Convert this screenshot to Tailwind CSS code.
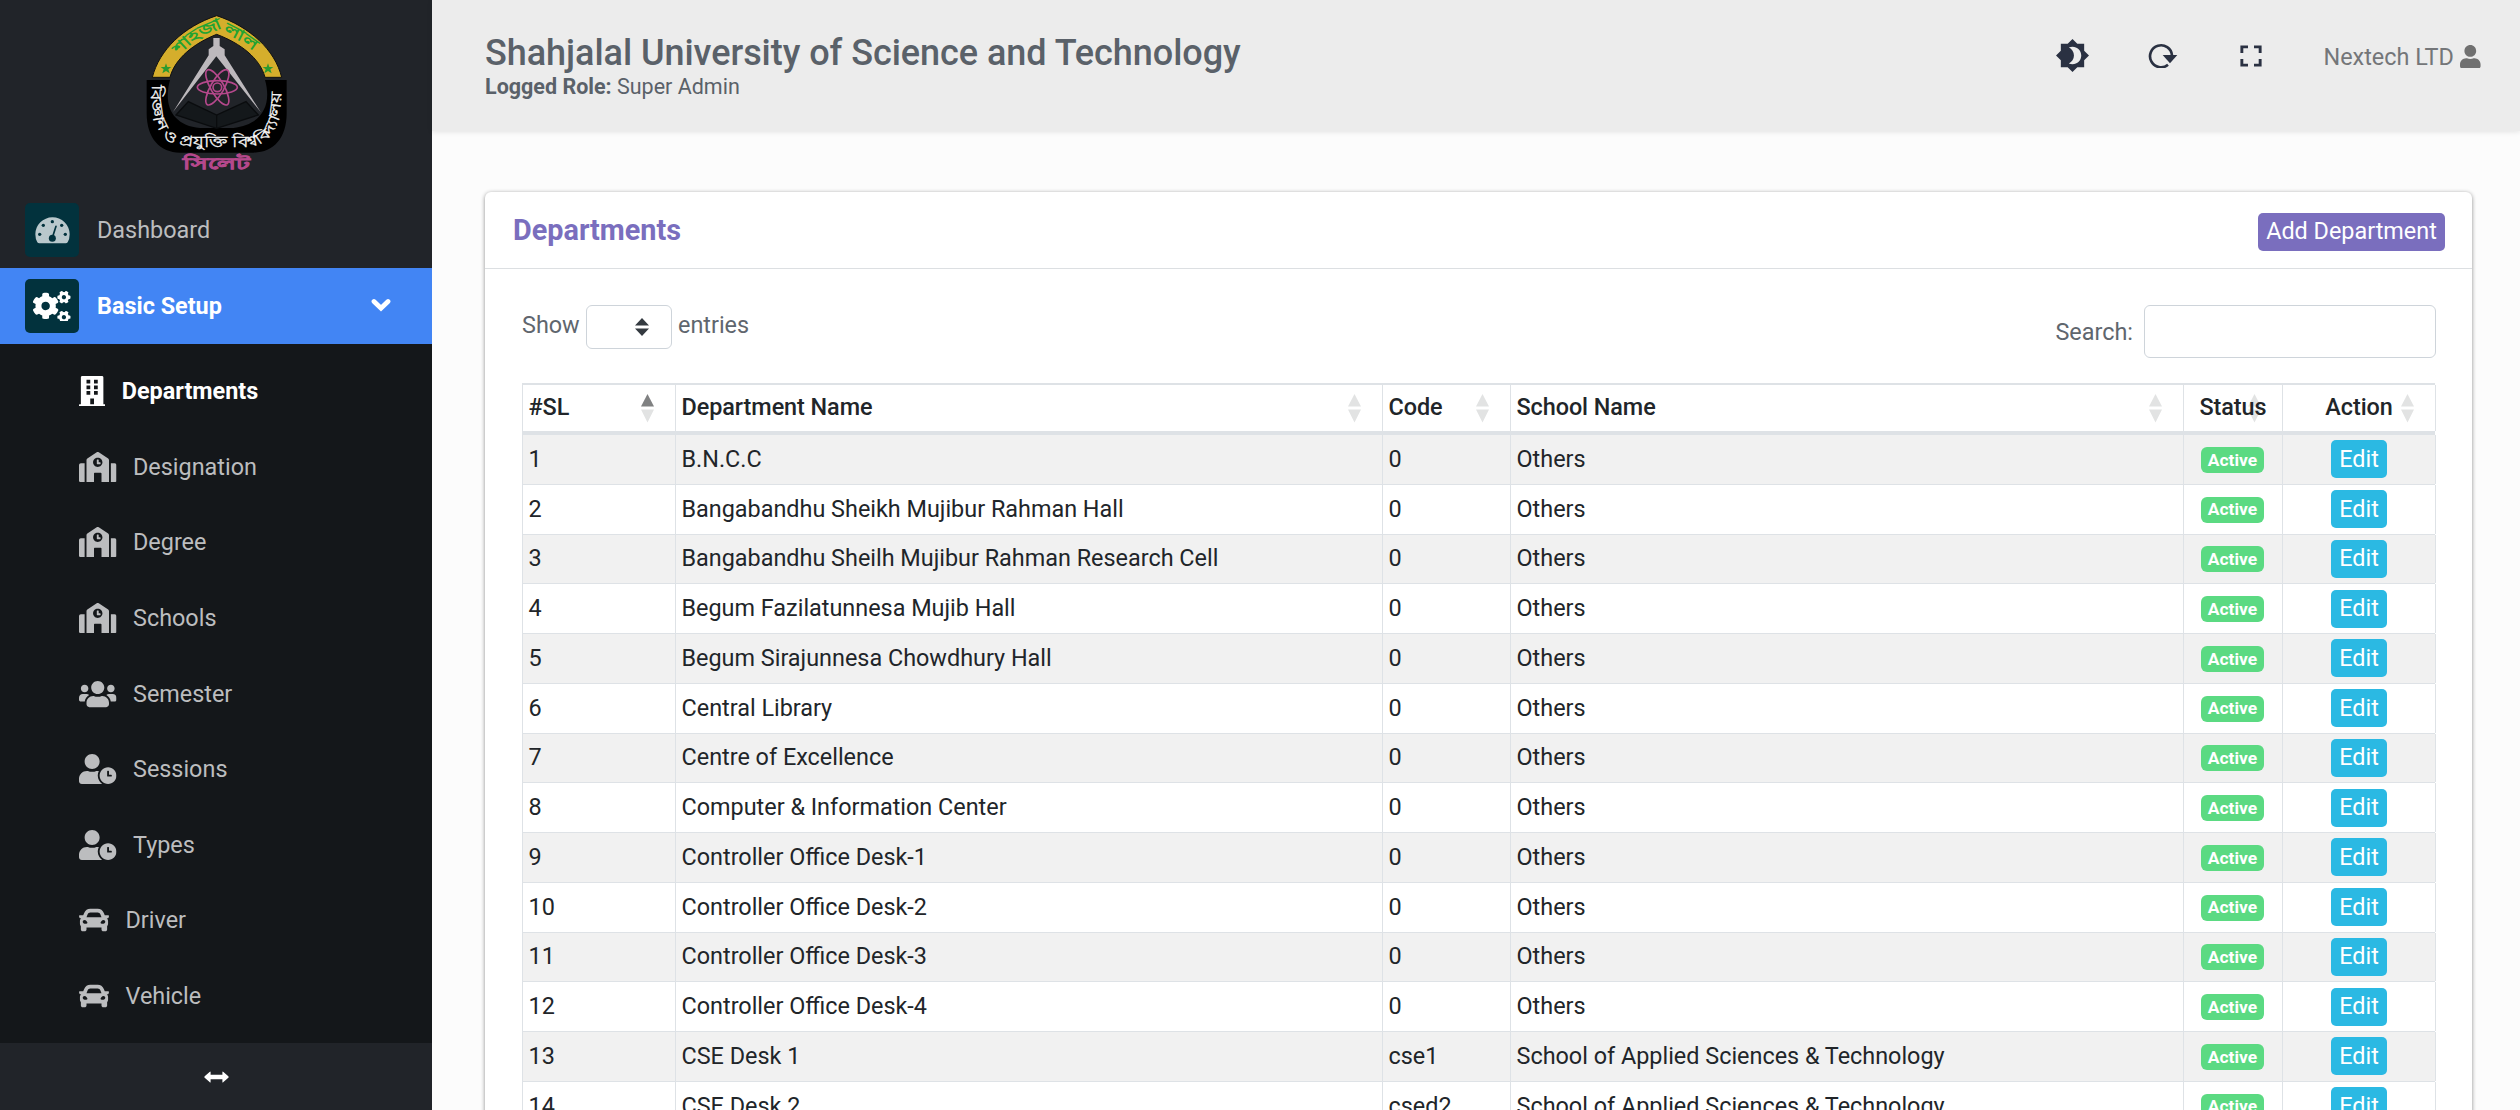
<!DOCTYPE html>
<html lang="en">
<head>
<meta charset="utf-8">
<title>Departments</title>
<script src="https://cdn.jsdelivr.net/npm/@tailwindcss/browser@4"></script>
</head>
<body class="h-[1110px] w-[2520px] overflow-hidden bg-[#fcfcfc] font-['Roboto',sans-serif] text-[23.4px] leading-[36px] text-[#212529]">
<svg class="hidden">
  <defs>
    <path id="small-gear" d="M512.1 191l-8.2 14.3c-3 5.3-9.4 7.5-15.1 5.4-11.8-4.4-22.6-10.7-32.1-18.6-4.6-3.8-5.8-10.5-2.8-15.7l8.2-14.3c-6.9-8-12.3-17.3-15.9-27.4h-16.5c-6 0-11.2-4.3-12.2-10.3-2-12-2.1-24.6 0-37.1 1-6 6.2-10.4 12.2-10.4h16.5c3.6-10.1 9-19.4 15.9-27.4l-8.2-14.3c-3-5.2-1.9-11.9 2.8-15.7 9.5-7.9 20.4-14.2 32.1-18.6 5.7-2.1 12.1.1 15.1 5.4l8.2 14.3c10.5-1.9 21.2-1.9 31.7 0L552 6.3c3-5.3 9.4-7.5 15.1-5.4 11.8 4.4 22.6 10.7 32.1 18.6 4.6 3.8 5.8 10.5 2.8 15.7l-8.2 14.3c6.9 8 12.3 17.3 15.9 27.4h16.5c6 0 11.2 4.3 12.2 10.3 2 12 2.1 24.6 0 37.1-1 6-6.2 10.4-12.2 10.4h-16.5c-3.6 10.1-9 19.4-15.9 27.4l8.2 14.3c3 5.2 1.9 11.9-2.8 15.7-9.5 7.9-20.4 14.2-32.1 18.6-5.7 2.1-12.1-.1-15.1-5.4l-8.2-14.3c-10.4 1.9-21.2 1.9-31.7 0zm-10.5-58.8c38.5 29.6 82.4-14.3 52.8-52.8-38.5-29.7-82.4 14.3-52.8 52.8z"/>
    <symbol id="building" viewBox="0 0 448 512"><path fill-rule="evenodd" d="M436 480h-20V24c0-13.3-10.7-24-24-24H56C42.7 0 32 10.700 32 24v456H12c-6.600 0-12 5.400-12 12v20h448v-20c0-6.600-5.400-12-12-12zM128 64h64v64h-64zM256 64h64v64h-64zM128 160h64v64h-64zM256 160h64v64h-64zM128 256h64v64h-64zM256 256h64v64h-64zM192 384h64v96h-64z"/></symbol>
    <symbol id="school" viewBox="0 0 640 512"><path d="M0 224v272c0 8.840 7.160 16 16 16h80V192H32c-17.670 0-32 14.330-32 32zm360-48h-24v-40c0-4.420-3.580-8-8-8h-16c-4.420 0-8 3.580-8 8v64c0 4.420 3.580 8 8 8h48c4.420 0 8-3.580 8-8v-16c0-4.420-3.580-8-8-8zm137.750-63.960l-160-106.670a32.020 32.020 0 0 0-35.500 0l-160 106.670A32.002 32.002 0 0 0 128 138.660V512h128V368c0-8.840 7.160-16 16-16h96c8.840 0 16 7.160 16 16v144h128V138.670c0-10.700-5.350-20.700-14.250-26.630zM320 256c-44.180 0-80-35.820-80-80s35.820-80 80-80 80 35.820 80 80-35.820 80-80 80zm288-64h-64v320h80c8.840 0 16-7.160 16-16V224c0-17.670-14.330-32-32-32z"/></symbol>
    <symbol id="users" viewBox="0 0 640 512"><path d="M96 224c35.300 0 64-28.700 64-64s-28.700-64-64-64-64 28.700-64 64 28.700 64 64 64zm448 0c35.300 0 64-28.700 64-64s-28.700-64-64-64-64 28.700-64 64 28.700 64 64 64zm32 32h-64c-17.600 0-33.500 7.100-45.100 18.600 40.300 22.100 68.900 62 75.100 109.400h66c17.700 0 32-14.300 32-32v-32c0-35.300-28.700-64-64-64zm-256 0c61.900 0 112-50.100 112-112S381.900 32 320 32 208 82.100 208 144s50.100 112 112 112zm76.800 32h-8.300c-20.800 10-43.900 16-68.500 16s-47.600-6-68.500-16h-8.300C179.600 288 128 339.600 128 403.200V432c0 26.500 21.500 48 48 48h288c26.500 0 48-21.500 48-48v-28.800c0-63.600-51.600-115.200-115.200-115.200zm-223.700-13.400C161.500 263.100 145.600 256 128 256H64c-35.300 0-64 28.700-64 64v32c0 17.700 14.300 32 32 32h65.900c6.300-47.400 34.900-87.300 75.200-109.400z"/></symbol>
    <symbol id="user-clock" viewBox="0 0 640 512"><path d="M496 224c-79.600 0-144 64.400-144 144s64.400 144 144 144 144-64.400 144-144-64.400-144-144-144zm64 150.300c0 5.300-4.400 9.700-9.700 9.700h-60.600c-5.300 0-9.700-4.400-9.700-9.700v-76.600c0-5.300 4.400-9.700 9.700-9.700h12.600c5.300 0 9.700 4.400 9.700 9.700V352h38.300c5.300 0 9.700 4.400 9.700 9.700v12.600zM320 368c0-27.800 6.700-54.100 18.200-77.500-8-1.500-16.200-2.500-24.600-2.500h-16.700c-22.200 10.200-46.900 16-72.900 16s-50.600-5.800-72.900-16h-16.700C60.200 288 0 348.200 0 422.400V464c0 26.500 21.500 48 48 48h347.100c-45.300-31.900-75.100-84.500-75.100-144zm-96-112c70.700 0 128-57.300 128-128S294.700 0 224 0 96 57.300 96 128s57.300 128 128 128z"/></symbol>
    <symbol id="car" viewBox="0 0 512 512"><path d="M499.990 176h-59.870l-16.640-41.600C406.380 91.630 365.570 64 319.500 64h-127c-46.060 0-86.880 27.630-103.990 70.400L71.870 176H12.010C4.200 176-1.530 183.340.37 190.910l6 24C7.700 220.250 12.500 224 18.010 224h20.070C24.650 235.730 16 252.780 16 272v48c0 16.120 6.160 30.670 16 41.930V416c0 17.670 14.330 32 32 32h32c17.670 0 32-14.330 32-32v-32h256v32c0 17.670 14.330 32 32 32h32c17.670 0 32-14.330 32-32v-54.070c9.840-11.250 16-25.800 16-41.930v-48c0-19.220-8.650-36.270-22.070-48H494c5.510 0 10.310-3.750 11.640-9.090l6-24c1.890-7.570-3.840-14.910-11.650-14.910zm-352.060-17.830c7.290-18.220 24.940-30.170 44.570-30.170h127c19.630 0 37.280 11.950 44.570 30.170L384 208H128l19.930-49.830zM96 319.800c-19.200 0-32-12.760-32-31.900S76.800 256 96 256s48 28.710 48 47.850-28.800 15.950-48 15.950zm320 0c-19.200 0-48 3.190-48-15.950S396.800 256 416 256s32 12.760 32 31.900-12.800 31.900-32 31.900z"/></symbol>
  </defs>
</svg>

<div class="flex h-full">
  <aside class="flex h-full w-[432px] shrink-0 flex-col bg-[#212429] text-[#bcbdbf]">
    <div class="flex h-[192px] shrink-0 justify-center pl-2">
      <svg class="h-[180px] w-[200px]" viewBox="0 0 600 540">
        <path fill="#000" d="M80 240H150C128 320 160 376 240 384H340C420 376 458 320 435 240H500V340C500 415 460 458 400 458H180C120 458 80 415 80 340Z"/>
        <path fill="#d5ae2c" stroke="#111" stroke-width="3" d="M97 232C118 150 190 80 290 47C390 80 465 150 485 232H435C420 175 362 130 290 103C222 130 165 175 150 232Z"/>
        <path fill="#14181b" stroke="#0a0c0e" stroke-width="4" d="M168 345L205 305L290 345L378 305L415 345L290 385Z"/>
        <path stroke="#0a0c0e" stroke-width="4" d="M290 345V385"/>
        <path fill="#bdb9bd" d="M280 114h19v24l15 10v18l108 170-133-167-130 167 107-170v-18l14-10z"/>
        <g fill="none" stroke="#b5488c" stroke-width="5">
          <ellipse cx="292" cy="262" rx="60" ry="20"/>
          <ellipse cx="292" cy="262" rx="60" ry="20" transform="rotate(60 292 262)"/>
          <ellipse cx="292" cy="262" rx="60" ry="20" transform="rotate(120 292 262)"/>
          <circle cx="292" cy="262" r="13"/>
        </g>
        <g fill="#2b9a30">
          <path d="M138 190l4 11 12 0-9 7 4 12-11-7-11 7 4-12-9-7 12 0z"/>
          <path d="M444 190l4 11 12 0-9 7 4 12-11-7-11 7 4-12-9-7 12 0z"/>
        </g>
        <path id="arch-line" fill="none" d="M178 166C208 132 245 108 290 91C335 108 378 132 415 166"/>
        <path id="bowl-line" fill="none" d="M95 254C88 395 130 440 225 440H365C450 440 488 395 484 250"/>
        <text class="font-semibold" fill="#20a332" font-size="46"><textPath href="#arch-line" textLength="262" lengthAdjust="spacingAndGlyphs">শাহজালাল</textPath></text>
        <text class="font-medium" fill="#f4f4f4" stroke="#f4f4f4" stroke-width="1" font-size="44"><textPath href="#bowl-line" textLength="640" lengthAdjust="spacingAndGlyphs">বিজ্ঞান ও প্রযুক্তি বিশ্ববিদ্যালয়</textPath></text>
        <text class="font-bold" fill="#b5488c" stroke="#b5488c" stroke-width="2" x="188" y="508" font-size="48" textLength="204" lengthAdjust="spacingAndGlyphs">সিলেট</text>
      </svg>
    </div>
    <a class="flex h-[76px] shrink-0 items-center gap-[18px] pl-[25px]">
      <span class="flex size-[54px] items-center justify-center rounded-[5px] bg-[#02323d]">
        <svg class="h-[27px] w-[35px]" viewBox="0 0 105 81">
          <path fill="#b9c8cc" d="M52 1A51 51 0 0 0 1 52Q1 66 7 76Q9 79 13 79H92Q96 79 98 76Q104 66 104 52A51 51 0 0 0 52 1Z"/>
          <g fill="#02323d"><circle cx="52" cy="14" r="5"/><circle cx="25" cy="25" r="5"/><circle cx="80" cy="25" r="5"/><circle cx="14" cy="52" r="5"/><circle cx="91" cy="52" r="5"/><circle cx="52" cy="64" r="10.500"/></g>
          <path stroke="#02323d" stroke-width="5" stroke-linecap="round" d="M52 62L63 28"/>
        </svg>
      </span>
      <span>Dashboard</span>
    </a>
    <a class="flex h-[76px] shrink-0 items-center gap-[18px] bg-[#4285f4] pr-[41px] pl-[25px] font-bold text-white">
      <span class="flex size-[54px] items-center justify-center rounded-[5px] bg-[#02323d]">
        <svg class="h-[30px] w-[37.5px] fill-white" viewBox="0 0 640 512">
          <use href="#small-gear"/><use href="#small-gear" y="341"/>
          <path d="M386.300 286.100l33.700 16.800c10.100 5.800 14.500 18.100 10.500 29.100-8.900 24.200-26.400 46.400-42.600 65.800-7.400 8.900-20.200 11.100-30.300 5.300l-29.100-16.800c-16 13.700-34.600 24.600-54.900 31.700v33.600c0 11.600-8.300 21.600-19.700 23.600-24.600 4.200-50.400 4.400-75.900 0-11.500-2-20-11.900-20-23.600V418c-20.300-7.200-38.900-18-54.900-31.700L74 403c-10 5.800-22.900 3.600-30.300-5.300-16.200-19.400-33.300-41.600-42.200-65.700-4-10.900.4-23.200 10.500-29.100l33.300-16.800c-3.900-20.900-3.900-42.400 0-63.400L12 205.800c-10.100-5.800-14.600-18.100-10.500-29 8.900-24.200 26-46.400 42.200-65.800 7.400-8.900 20.200-11.100 30.300-5.300l29.100 16.800c16-13.700 34.600-24.600 54.900-31.700V57.100c0-11.500 8.200-21.500 19.600-23.500 24.600-4.200 50.500-4.400 76-.1 11.500 2 20 11.900 20 23.600v33.600c20.300 7.200 38.900 18 54.900 31.700l29.100-16.800c10-5.800 22.900-3.600 30.300 5.300 16.200 19.400 33.200 41.600 42.100 65.800 4 10.900.1 23.200-10 29.100l-33.700 16.800c3.900 21 3.900 42.500 0 63.500zm-117.600 21.100c59.200-77-28.700-164.900-105.700-105.700-59.200 77 28.700 164.900 105.700 105.700z"/>
        </svg>
      </span>
      <span class="grow">Basic Setup</span>
      <svg class="mt-[-2px] h-[14px] w-[20px]" viewBox="0 0 20 14"><path d="M3 3.500l7 6.700 7-6.700" fill="none" stroke="#fff" stroke-width="4.800" stroke-linecap="round"/></svg>
    </a>
    <nav id="submenu" class="min-h-0 grow overflow-hidden bg-[#14171a] pt-[9.5px]"></nav>
    <div class="flex h-[67px] shrink-0 items-center justify-center">
      <svg class="h-[12px] w-[25px] fill-white" viewBox="0 0 72 33"><path d="M19 2v8h34V2q0-3 3 0l14 12q2 2.500 0 5L56 31q-3 3-3 0v-8H19v8q0 3-3 0L2 19q-2-2.500 0-5L16 2q3-3 3 0z"/></svg>
    </div>
  </aside>

  <div class="flex min-w-0 grow flex-col">
    <header class="flex h-[130.5px] shrink-0 justify-between bg-[#ececec] pr-[39.5px] pl-[53px] text-[#5a6169] shadow-[0_1px_5px_rgba(0,0,0,0.1)]">
      <div class="pt-[32px]">
        <h1 class="text-[36px] leading-[42px] font-medium tracking-[-0.04px]">Shahjalal University of Science and Technology</h1>
        <p class="text-[21.500px] leading-[26px]"><b class="font-bold">Logged Role:</b> Super Admin</p>
      </div>
      <div class="flex h-[111px] items-center text-[#2a3142]">
        <svg class="mr-[57px] size-[35px] fill-current" viewBox="0 0 24 24"><path d="M20 8.690V4h-4.690L12 .69 8.690 4H4v4.690L.69 12 4 15.310V20h4.690L12 23.310 15.310 20H20v-4.690L23.310 12 20 8.690zM12 18c-.89 0-1.740-.2-2.500-.55C11.560 16.500 13 14.420 13 12s-1.440-4.500-3.500-5.450C10.260 6.200 11.110 6 12 6c3.310 0 6 2.690 6 6s-2.690 6-6 6z"/></svg>
        <svg class="mr-[60.500px] h-[25px] w-[33px]" viewBox="0 0 99 75"><path d="M61 65.500A33 33 0 1 1 73 37" transform="translate(2 0)" fill="none" stroke="currentColor" stroke-width="8"/><path fill="currentColor" d="M47 36h44L69 61z"/></svg>
        <svg class="mr-[61px] size-[22px]" viewBox="0 0 22 22"><path fill="none" stroke="currentColor" stroke-width="2.900" d="M1.850 8V1.850H8M14 1.850h6.150V8M20.150 14v6.150H14M8 20.150H1.850V14"/></svg>
        <span class="mr-[6px] pt-[2px] text-[#747679]">Nextech LTD</span>
        <svg class="mt-[2px] h-[23.500px] w-[20.600px] fill-[#707070]" viewBox="0 0 448 512"><path d="M224 256c70.700 0 128-57.300 128-128S294.700 0 224 0 96 57.300 96 128s57.300 128 128 128zm89.600 32h-16.700c-22.200 10.200-46.900 16-72.900 16s-50.600-5.800-72.900-16h-16.700C60.200 288 0 348.200 0 422.400V464c0 26.500 21.500 48 48 48h352c26.500 0 48-21.500 48-48v-41.600c0-74.200-60.200-134.400-134.400-134.400z"/></svg>
      </div>
    </header>

    <main class="min-h-0 grow overflow-hidden pt-[61.500px] pr-[48px] pl-[53px]">
      <section class="h-[1000px] rounded-[6px] bg-white shadow-[0_1px_4px_rgba(0,0,0,0.45)]">
        <div class="flex h-[77px] items-center justify-between border-b border-[#dcdfe2] pr-[27px] pl-[28px]">
          <h2 class="mt-[-1px] text-[28.800px] leading-[36px] font-bold text-[#7a6ebe]">Departments</h2>
          <button class="mt-[3px] flex h-[38px] w-[187px] items-center justify-center rounded-[5px] bg-[#7a6ebe] pb-px text-white">Add Department</button>
        </div>
        <div class="px-[37px] pt-[36px]">
          <div class="flex h-[78px] justify-between text-[#5f666e]">
            <div class="flex h-[44px] items-center">
              <span class="mt-[-4px] w-[64px]">Show</span>
              <span class="flex h-[44px] w-[86px] items-center justify-end rounded-[6px] border border-[#ced4da] pr-[22px]">
                <svg class="h-[18px] w-[14px] fill-[#343a40]" viewBox="0 0 14 18"><path d="M7 0l7 7.500H0zM0 10.500h14L7 18z"/></svg>
              </span>
              <span class="mt-[-4px] ml-[6px]">entries</span>
            </div>
            <div class="flex h-[53px] items-center">
              <span class="mr-[11px]">Search:</span>
              <span class="mr-[-1px] h-[53px] w-[292px] rounded-[6px] border border-[#ced4da]"></span>
            </div>
          </div>
          <div id="table" class="border-l border-[#dee2e6]"></div>
        </div>
      </section>
    </main>
  </div>
</div>

<script>
const menu = [
  ['building', 'w-[26.25px]', 'Departments'],
  ['school', 'w-[37.5px]', 'Designation'],
  ['school', 'w-[37.5px]', 'Degree'],
  ['school', 'w-[37.5px]', 'Schools'],
  ['users', 'w-[37.5px]', 'Semester'],
  ['user-clock', 'w-[37.5px]', 'Sessions'],
  ['user-clock', 'w-[37.5px]', 'Types'],
  ['car', 'w-[30px]', 'Driver'],
  ['car', 'w-[30px]', 'Vehicle'],
];
document.getElementById('submenu').innerHTML = menu.map(([icon, width, label], i) => `
  <a class="flex h-[75.6px] items-center gap-[16.5px] pl-[79px] ${i === 0 ? 'font-bold text-white' : ''}">
    <svg class="h-[30px] ${width} shrink-0 fill-current"><use href="#${icon}"/></svg><span>${label}</span>
  </a>`).join('');

const columns = [['#SL', ''], ['Department Name', ''], ['Code', ''], ['School Name', ''], ['Status', 'justify-center'], ['Action', 'justify-center']];
const head = columns.map(([label, align], i) => `
  <div class="relative flex items-center border-r border-[#dee2e6] px-[5.5px] pb-[2px] ${align}">
    <svg class="absolute top-[8.5px] right-[21px] h-[29px] w-[13px]" viewBox="0 0 13 29">
      <path class="${i === 0 ? 'fill-[#808182]' : 'fill-[#e2e3e3]'}" d="M6.5 0L13 12.500H0z"/><path class="fill-[#e2e3e3]" d="M0 15.500H13L6.500 28.500z"/>
    </svg>
    <span class="relative">${label}</span>
  </div>`).join('');

const others = 'Others', sast = 'School of Applied Sciences &amp; Technology';
const rows = [
  ['B.N.C.C', '0', others],
  ['Bangabandhu Sheikh Mujibur Rahman Hall', '0', others],
  ['Bangabandhu Sheilh Mujibur Rahman Research Cell', '0', others],
  ['Begum Fazilatunnesa Mujib Hall', '0', others],
  ['Begum Sirajunnesa Chowdhury Hall', '0', others],
  ['Central Library', '0', others],
  ['Centre of Excellence', '0', others],
  ['Computer &amp; Information Center', '0', others],
  ['Controller Office Desk-1', '0', others],
  ['Controller Office Desk-2', '0', others],
  ['Controller Office Desk-3', '0', others],
  ['Controller Office Desk-4', '0', others],
  ['CSE Desk 1', 'cse1', sast],
  ['CSE Desk 2', 'csed2', sast],
];
const cell = text => `<div class="flex items-center border-r border-[#dee2e6] px-[5.5px] pb-[1px]">${text}</div>`;
document.getElementById('table').innerHTML = `
  <div class="grid h-[52px] grid-cols-[153px_707px_128px_673px_99px_153px] border-t-2 border-b-4 border-[#dee2e6] font-medium tracking-[-0.06px]">${head}</div>
  ${rows.map((row, i) => `
  <div class="grid h-[49.75px] grid-cols-[153px_707px_128px_673px_99px_153px] border-b border-[#dee2e6] ${i % 2 ? 'bg-white' : 'bg-[#f1f1f1]'}">
    ${[i + 1, ...row].map(cell).join('')}
    <div class="flex items-center justify-center border-r border-[#dee2e6] pr-px"><span class="mt-[1px] flex h-[26px] w-[63px] items-center justify-center rounded-[6px] bg-[#5bda82] pt-[1px] text-[17.4px] leading-none font-bold text-white">Active</span></div>
    <div class="flex items-center justify-center border-r border-[#dee2e6]"><span class="flex h-[38px] w-[56px] items-center justify-center rounded-[5px] bg-[#2bb9e3] pb-px text-white">Edit</span></div>
  </div>`).join('')}`;
</script>
</body>
</html>
